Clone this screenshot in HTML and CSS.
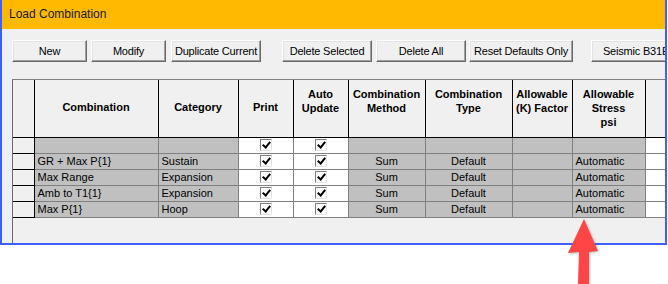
FILE: index.html
```html
<!DOCTYPE html>
<html lang="en">
<head>
  <meta charset="UTF-8">
  <title>Load Combination</title>
  <link rel="stylesheet" href="styles.css">
</head>
<body>
  <div class="window">
    <div class="titlebar">Load Combination</div>

    <div class="toolbar">
      <button class="btn btn-new">New</button>
      <button class="btn btn-modify">Modify</button>
      <button class="btn btn-dup">Duplicate Current</button>
      <button class="btn btn-delsel">Delete Selected</button>
      <button class="btn btn-delall">Delete All</button>
      <button class="btn btn-reset">Reset Defaults Only</button>
      <button class="btn btn-seismic">Seismic B31E</button>
    </div>

    <div class="grid-frame">
      <table class="grid">
        <colgroup>
          <col class="c-rh">
          <col class="c-comb">
          <col class="c-cat">
          <col class="c-print">
          <col class="c-auto">
          <col class="c-method">
          <col class="c-type">
          <col class="c-kfac">
          <col class="c-stress">
          <col class="c-last">
        </colgroup>
        <thead>
          <tr>
            <th></th>
            <th class="single">Combination</th>
            <th class="single">Category</th>
            <th class="single">Print</th>
            <th>Auto<br>Update</th>
            <th>Combination<br>Method</th>
            <th>Combination<br>Type</th>
            <th>Allowable<br>(K) Factor</th>
            <th>Allowable<br>Stress<br>psi</th>
            <th></th>
          </tr>
        </thead>
        <tbody>
          <tr>
            <td class="rh"></td>
            <td class="gray"></td>
            <td class="gray"></td>
            <td class="white"><span class="check"></span></td>
            <td class="white"><span class="check"></span></td>
            <td class="gray"></td>
            <td class="gray"></td>
            <td class="gray"></td>
            <td class="gray"></td>
            <td class="white"></td>
          </tr>
          <tr>
            <td class="rh"></td>
            <td class="gray">GR + Max P{1}</td>
            <td class="gray">Sustain</td>
            <td class="white"><span class="check"></span></td>
            <td class="white"><span class="check"></span></td>
            <td class="gray center">Sum</td>
            <td class="gray center">Default</td>
            <td class="gray"></td>
            <td class="gray">Automatic</td>
            <td class="white"></td>
          </tr>
          <tr>
            <td class="rh"></td>
            <td class="gray">Max Range</td>
            <td class="gray">Expansion</td>
            <td class="white"><span class="check"></span></td>
            <td class="white"><span class="check"></span></td>
            <td class="gray center">Sum</td>
            <td class="gray center">Default</td>
            <td class="gray"></td>
            <td class="gray">Automatic</td>
            <td class="white"></td>
          </tr>
          <tr>
            <td class="rh"></td>
            <td class="gray">Amb to T1{1}</td>
            <td class="gray">Expansion</td>
            <td class="white"><span class="check"></span></td>
            <td class="white"><span class="check"></span></td>
            <td class="gray center">Sum</td>
            <td class="gray center">Default</td>
            <td class="gray"></td>
            <td class="gray">Automatic</td>
            <td class="white"></td>
          </tr>
          <tr>
            <td class="rh"></td>
            <td class="gray">Max P{1}</td>
            <td class="gray">Hoop</td>
            <td class="white"><span class="check"></span></td>
            <td class="white"><span class="check"></span></td>
            <td class="gray center">Sum</td>
            <td class="gray center">Default</td>
            <td class="gray"></td>
            <td class="gray">Automatic</td>
            <td class="white"></td>
          </tr>
        </tbody>
      </table>
    </div>
  </div>

  <!-- callout arrow pointing at the Allowable Stress column -->
  <svg class="callout" width="40" height="70" viewBox="0 0 40 70">
    <polygon points="19,0 3,34 14,33 13,65 24,65 24,33 33,32" fill="#ff4545"/>
  </svg>
</body>
</html>
```

FILE: styles.css
```css
body {
  margin: 0;
  background: #fff;
  font-family: "Liberation Sans", Arial, sans-serif;
  position: relative;
  height: 284px;
  overflow: hidden;
}
.window {
  width: 663px;
  height: 243px;
  border: 2px solid #3f5fff;
  border-top: none;
  background: #f0f0f0;
  overflow: hidden;
  display: flex;
  flex-direction: column;
}
.titlebar {
  height: 29px;
  background: #ffb900;
  color: #1a1a1a;
  font-size: 12px;
  line-height: 29px;
  padding-left: 7px;
  flex-shrink: 0;
}
.toolbar {
  display: flex;
  padding: 11px 0 0 10px;
  flex-shrink: 0;
  white-space: nowrap;
}
.btn {
  height: 22px;
  flex-shrink: 0;
  padding: 0;
  background: #f0f0f0;
  font-family: "Liberation Sans", Arial, sans-serif;
  font-size: 11px;
  letter-spacing: -0.2px;
  color: #000;
  border: 1px solid;
  border-color: #fff #696969 #696969 #fff;
  box-shadow: inset -1px -1px 0 #a0a0a0, inset 1px 1px 0 #e3e3e3;
}
.btn-new { width: 75px; }
.btn-modify { width: 75px; margin-left: 4px; }
.btn-dup { width: 90px; margin-left: 5px; }
.btn-delsel { width: 90px; margin-left: 21px; }
.btn-delall { width: 90px; margin-left: 4px; }
.btn-reset { width: 104px; margin-left: 3px; }
.btn-seismic { width: 90px; margin-left: 18px; }

.grid-frame {
  margin: 17px 0 0 10px;
  flex: 1;
  border-left: 1px solid #696969;
  border-top: 1px solid #808080;
  overflow: hidden;
}
.grid {
  border-collapse: collapse;
  table-layout: fixed;
  width: 682px;
  font-size: 11px;
  color: #000;
}
.c-rh { width: 21px; }
.c-comb { width: 124px; }
.c-cat { width: 80px; }
.c-print { width: 55px; }
.c-auto { width: 55px; }
.c-method { width: 77px; }
.c-type { width: 87px; }
.c-kfac { width: 60px; }
.c-stress { width: 73px; }
.c-last { width: 50px; }

.grid th {
  height: 57px;
  padding: 7px 0 0;
  box-sizing: border-box;
  background: #f0f0f0;
  border: 1px solid #000;
  border-top: none;
  font-weight: bold;
  line-height: 14px;
  text-align: center;
  vertical-align: top;
}
.grid th.single {
  padding-top: 20px;
}
.grid th:first-child {
  border-left: none;
  border-right: 1px solid #000;
}
.grid td {
  height: 15px;
  padding: 0 0 0 3px;
  border: 1px solid #808080;
  line-height: 14px;
  white-space: nowrap;
  overflow: hidden;
}
.grid td.rh {
  background: #f0f0f0;
  border: 1px solid #000;
  border-left: none;
}
.gray { background: #c0c0c0; }
.white { background: #fff; text-align: center; padding-left: 0 !important; }
.center { text-align: center; padding-left: 0 !important; }

.check {
  display: inline-block;
  position: relative;
  width: 10px;
  height: 10px;
  vertical-align: middle;
  margin-top: -2px;
  border: 1px solid;
  border-color: #808080 #e6e6e6 #e6e6e6 #808080;
  background: #fff;
}
.check::after {
  content: "";
  position: absolute;
  left: 3px;
  top: 0px;
  width: 3px;
  height: 6px;
  border: solid #000;
  border-width: 0 2px 2px 0;
  transform: rotate(40deg);
}

.callout {
  position: absolute;
  left: 565px;
  top: 219px;
  filter: drop-shadow(1px 1px 1px rgba(0, 0, 0, 0.25));
}
```
